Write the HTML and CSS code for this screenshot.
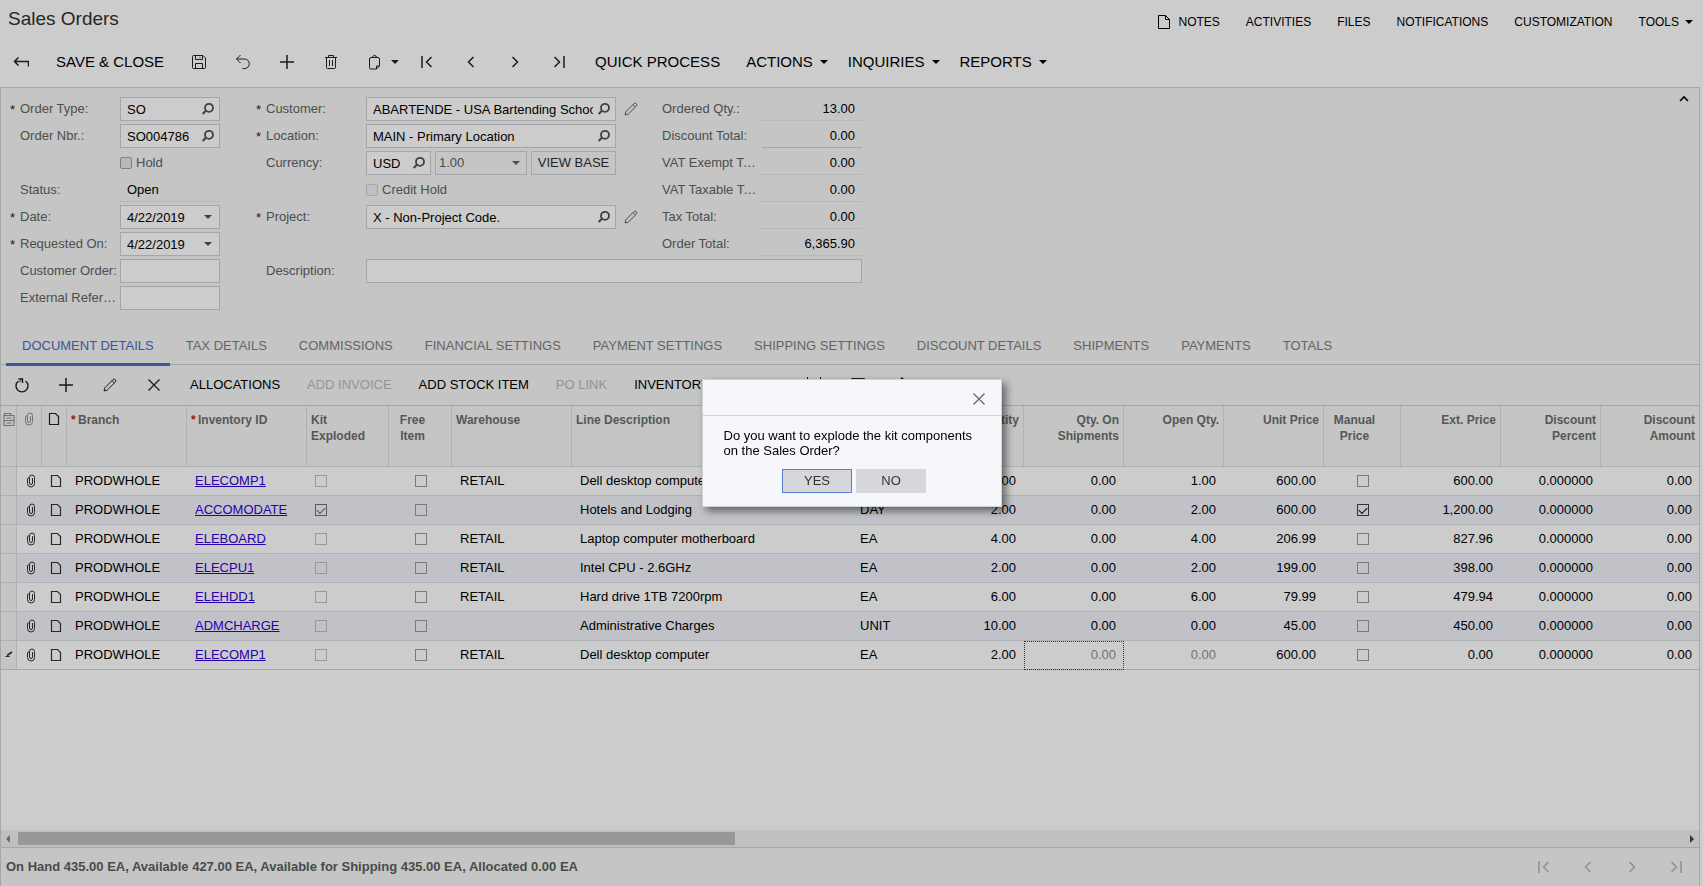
FILE: index.html
```html
<!DOCTYPE html>
<html lang="en">
<head>
  <meta charset="UTF-8" />
  <meta name="viewport" content="width=device-width, initial-scale=1.0" />
  <title>Sales Orders</title>
  <link rel="stylesheet" href="styles.css">
</head>
<body>
  <!-- icon sprite -->
  <svg class="sprite" aria-hidden="true">
    <symbol id="i-back" viewBox="0 0 16 16"><path d="M15.500 12.500V7.500H1.500M5.500 3.500L1.500 7.500L5.500 11.500" stroke-width="1.500"/></symbol>
    <symbol id="i-save" viewBox="0 0 16 16"><path d="M1.500 2.500a1 1 0 0 1 1-1H12l2.500 2.500v9.500a1 1 0 0 1-1 1h-11a1 1 0 0 1-1-1zM4.500 1.500v4h7v-4M8.500 3.500h1M4.500 14.500v-5h7v5"/></symbol>
    <symbol id="i-undo" viewBox="0 0 16 16"><path d="M5.500 1L1.500 5l4 4M1.500 5H9.500a4.800 4.800 0 0 1 0 9.600H7.500"/></symbol>
    <symbol id="i-plus" viewBox="0 0 16 16"><path d="M8 1v14M1 8h14" stroke-width="1.500"/></symbol>
    <symbol id="i-trash" viewBox="0 0 16 16"><path d="M2 3.500h12M5.500 3V1.500h5V3M3.500 3.500v10a1 1 0 0 0 1 1h7a1 1 0 0 0 1-1v-10M6.500 6v6M9.500 6v6"/></symbol>
    <symbol id="i-clip" viewBox="0 0 16 16"><path d="M5 3.500H4A1.500 1.500 0 0 0 2.500 5v8.500A1.500 1.500 0 0 0 4 15h5.500l3-3V5A1.500 1.500 0 0 0 11 3.500h-1M5 3.500h5M5.500 3.500a2 2 0 0 1 4 0M9.500 15v-3h3"/></symbol>
    <symbol id="i-first" viewBox="0 0 16 16"><path d="M3 2v12M12.500 3L7.500 8l5 5" stroke-width="1.500"/></symbol>
    <symbol id="i-prev" viewBox="0 0 16 16"><path d="M10.500 3L5.500 8l5 5" stroke-width="1.500"/></symbol>
    <symbol id="i-next" viewBox="0 0 16 16"><path d="M5.500 3l5 5l-5 5" stroke-width="1.500"/></symbol>
    <symbol id="i-last" viewBox="0 0 16 16"><path d="M13 2v12M3.500 3l5 5l-5 5" stroke-width="1.500"/></symbol>
    <symbol id="i-page" viewBox="0 0 16 16"><path d="M2.500 1.500h7l4 4v9h-11zM9.500 1.500v4h4"/></symbol>
    <symbol id="i-note" viewBox="0 0 16 16"><path d="M3.500 2.500h6l3 3v8h-9z" stroke-width="1.200"/></symbol>
    <symbol id="i-pencil" viewBox="0 0 16 16"><path d="M2 14l.8-3.200L11 2.600a1.700 1.700 0 0 1 2.400 2.400L5.200 13.200zM10 3.600l2.400 2.400"/></symbol>
    <symbol id="i-x" viewBox="0 0 16 16"><path d="M2.500 2.500l11 11M13.500 2.500l-11 11" stroke-width="1.300"/></symbol>
    <symbol id="i-refresh" viewBox="0 0 16 16"><path d="M4.500 4A6 6 0 1 0 11.500 4M4.500 2h4v4" stroke-width="1.400"/><path d="M8 2.500L5 5.500"/></symbol>
    <symbol id="i-look" viewBox="0 0 16 16"><path d="M5.800 9.800L2.700 13" stroke-width="2"/><circle cx="9" cy="6.800" r="4" stroke-width="1.800"/></symbol>
    <symbol id="i-clipper" viewBox="0 0 16 16"><path d="M9.500 5v5a1.500 1.500 0 0 1-3 0V4.500a2 2 0 0 0-2 1.500v4.500a3.500 3.500 0 0 0 7 0v-6a2.500 2.500 0 0 0-5 0"/></symbol>
    <symbol id="i-cfg" viewBox="0 0 16 16"><path d="M3.500 4.500v-2h6l1 2M3 4.500h10v10H3zM3 9.500h10M5.500 7h5M5.500 12h5" stroke-width="1.100"/></symbol>
    <symbol id="i-fit" viewBox="0 0 16 16"><path d="M1.500 0v15M14.500 0v15M4 8h8M6 6L4 8l2 2M10 6l2 2l-2 2"/></symbol>
    <symbol id="i-box" viewBox="0 0 16 16"><path d="M1.500 14.500v-13h13v13zM5 9l3 3l3-3M8 5v7"/></symbol>
    <symbol id="i-up" viewBox="0 0 16 16"><path d="M8 14V1M4 5l4-4l4 4" stroke-width="1.400"/></symbol>
    <symbol id="i-edit" viewBox="0 0 16 16"><path d="M6 8.500l5-3.500" stroke-width="1.600"/><path d="M4.500 9.500h4" /></symbol>
    <symbol id="i-collapse" viewBox="0 0 16 16"><path d="M4 10l4-4l4 4" stroke-width="1.600"/></symbol>
  </svg>

  <header class="page-head">
    <div class="title-row">
      <h1>Sales Orders</h1>
      <nav class="top-links">
        <a href="#"><svg class="ic"><use href="#i-page"/></svg>NOTES</a>
        <a href="#">ACTIVITIES</a>
        <a href="#">FILES</a>
        <a href="#">NOTIFICATIONS</a>
        <a href="#">CUSTOMIZATION</a>
        <a href="#">TOOLS <i class="caret"></i></a>
      </nav>
    </div>
    <div class="toolbar">
      <button class="icon-btn back" aria-label="Back"><svg class="ic"><use href="#i-back"/></svg></button>
      <button class="text-btn">SAVE &amp; CLOSE</button>
      <button class="icon-btn" aria-label="Save"><svg class="ic"><use href="#i-save"/></svg></button>
      <button class="icon-btn" aria-label="Undo"><svg class="ic"><use href="#i-undo"/></svg></button>
      <button class="icon-btn" aria-label="Add"><svg class="ic"><use href="#i-plus"/></svg></button>
      <button class="icon-btn" aria-label="Delete"><svg class="ic"><use href="#i-trash"/></svg></button>
      <button class="icon-btn with-caret" aria-label="Clipboard"><svg class="ic"><use href="#i-clip"/></svg><i class="caret"></i></button>
      <button class="icon-btn" aria-label="First"><svg class="ic"><use href="#i-first"/></svg></button>
      <button class="icon-btn" aria-label="Previous"><svg class="ic"><use href="#i-prev"/></svg></button>
      <button class="icon-btn" aria-label="Next"><svg class="ic"><use href="#i-next"/></svg></button>
      <button class="icon-btn" aria-label="Last"><svg class="ic"><use href="#i-last"/></svg></button>
      <button class="text-btn">QUICK PROCESS</button>
      <button class="menu-btn">ACTIONS <i class="caret"></i></button>
      <button class="menu-btn">INQUIRIES <i class="caret"></i></button>
      <button class="menu-btn">REPORTS <i class="caret"></i></button>
    </div>
  </header>

  <main class="panel">
    <form class="order-form">
      <label class="c1 req" for="orderType">Order Type:</label>
      <div class="c2 field"><input id="orderType" type="text" value="SO"><button type="button" aria-label="Find"><svg class="ic"><use href="#i-look"/></svg></button></div>
      <label class="c4 req" for="customer">Customer:</label>
      <div class="c5 field"><input id="customer" type="text" value="ABARTENDE - USA Bartending School"><button type="button" aria-label="Find"><svg class="ic"><use href="#i-look"/></svg></button></div>
      <button class="c6 edit" type="button" aria-label="Edit customer"><svg class="ic"><use href="#i-pencil"/></svg></button>
      <span class="c7 label">Ordered Qty.:</span><output class="c8">13.00</output>

      <label class="c1" for="orderNbr">Order Nbr.:</label>
      <div class="c2 field"><input id="orderNbr" type="text" value="SO004786"><button type="button" aria-label="Find"><svg class="ic"><use href="#i-look"/></svg></button></div>
      <label class="c4 req" for="location">Location:</label>
      <div class="c5 field"><input id="location" type="text" value="MAIN - Primary Location"><button type="button" aria-label="Find"><svg class="ic"><use href="#i-look"/></svg></button></div>
      <span class="c7 label">Discount Total:</span><output class="c8 solid">0.00</output>

      <label class="c2 check"><input type="checkbox"> Hold</label>
      <label class="c4" for="currency">Currency:</label>
      <div class="c5 currency">
        <div class="field cur"><input id="currency" type="text" value="USD"><button type="button" aria-label="Find"><svg class="ic"><use href="#i-look"/></svg></button></div>
        <div class="field rate"><select aria-label="Rate" disabled><option>1.00</option></select><i class="caret"></i></div>
        <button type="button" class="view-base">VIEW BASE</button>
      </div>
      <span class="c7 label">VAT Exempt Total:</span><output class="c8">0.00</output>

      <span class="c1 label">Status:</span><output class="c2 status">Open</output>
      <label class="c5 check off"><input type="checkbox" disabled> Credit Hold</label>
      <span class="c7 label">VAT Taxable Total:</span><output class="c8">0.00</output>

      <label class="c1 req" for="date">Date:</label>
      <div class="c2 field"><input id="date" type="text" value="4/22/2019"><button type="button" aria-label="Pick date"><i class="caret"></i></button></div>
      <label class="c4 req" for="project">Project:</label>
      <div class="c5 field"><input id="project" type="text" value="X - Non-Project Code."><button type="button" aria-label="Find"><svg class="ic"><use href="#i-look"/></svg></button></div>
      <button class="c6 edit" type="button" aria-label="Edit project"><svg class="ic"><use href="#i-pencil"/></svg></button>
      <span class="c7 label">Tax Total:</span><output class="c8">0.00</output>

      <label class="c1 req" for="requested">Requested On:</label>
      <div class="c2 field"><input id="requested" type="text" value="4/22/2019"><button type="button" aria-label="Pick date"><i class="caret"></i></button></div>
      <span class="c7 label">Order Total:</span><output class="c8">6,365.90</output>

      <label class="c1" for="custOrder">Customer Order:</label>
      <div class="c2 field"><input id="custOrder" type="text"></div>
      <label class="c4" for="descr">Description:</label>
      <div class="c5 wide field"><input id="descr" type="text"></div>

      <label class="c1" for="extRef">External Reference:</label>
      <div class="c2 field"><input id="extRef" type="text"></div>

      <button class="collapse" type="button" aria-label="Collapse"><svg class="ic"><use href="#i-collapse"/></svg></button>
    </form>

    <nav class="tabs">
      <a href="#" class="active">DOCUMENT DETAILS</a>
      <a href="#">TAX DETAILS</a>
      <a href="#">COMMISSIONS</a>
      <a href="#">FINANCIAL SETTINGS</a>
      <a href="#">PAYMENT SETTINGS</a>
      <a href="#">SHIPPING SETTINGS</a>
      <a href="#">DISCOUNT DETAILS</a>
      <a href="#">SHIPMENTS</a>
      <a href="#">PAYMENTS</a>
      <a href="#">TOTALS</a>
    </nav>

    <div class="grid-bar">
      <button class="icon-btn" aria-label="Refresh"><svg class="ic"><use href="#i-refresh"/></svg></button>
      <button class="icon-btn" aria-label="Add row"><svg class="ic"><use href="#i-plus"/></svg></button>
      <button class="icon-btn" aria-label="Edit row"><svg class="ic"><use href="#i-pencil"/></svg></button>
      <button class="icon-btn" aria-label="Delete row"><svg class="ic"><use href="#i-x"/></svg></button>
      <button class="text-btn">ALLOCATIONS</button>
      <button class="text-btn" disabled>ADD INVOICE</button>
      <button class="text-btn">ADD STOCK ITEM</button>
      <button class="text-btn" disabled>PO LINK</button>
      <button class="text-btn">INVENTORY SUMMARY</button>
      <button class="icon-btn" aria-label="Fit to screen"><svg class="ic"><use href="#i-fit"/></svg></button>
      <button class="icon-btn" aria-label="Export"><svg class="ic"><use href="#i-box"/></svg></button>
      <button class="icon-btn" aria-label="Load"><svg class="ic"><use href="#i-up"/></svg></button>
    </div>

    <div class="grid-wrap">
      <table id="lines">
        <colgroup>
          <col class="w16"><col class="w25"><col class="w25"><col class="w120"><col class="w120"><col class="w82"><col class="w63"><col class="w120"><col>
          <col class="w72"><col class="w100"><col class="w100"><col class="w100"><col class="w100"><col class="w77"><col class="w100"><col class="w100"><col class="w98">
        </colgroup>
        <thead>
          <tr>
            <th class="ico dim"><svg class="ic"><use href="#i-cfg"/></svg></th>
            <th class="ico dim"><svg class="ic"><use href="#i-clipper"/></svg></th>
            <th class="ico"><svg class="ic dark"><use href="#i-note"/></svg></th>
            <th><b class="star">*</b>Branch</th>
            <th><b class="star">*</b>Inventory ID</th>
            <th>Kit Exploded</th>
            <th class="mid">Free Item</th>
            <th>Warehouse</th>
            <th>Line Description</th>
            <th>UOM</th>
            <th class="num">Quantity</th>
            <th class="num">Qty. On Shipments</th>
            <th class="num">Open Qty.</th>
            <th class="num">Unit Price</th>
            <th class="mid">Manual Price</th>
            <th class="num">Ext. Price</th>
            <th class="num">Discount Percent</th>
            <th class="num">Discount Amount</th>
          </tr>
        </thead>
        <tbody></tbody>
      </table>
    </div>

    <div class="scrollbar"><i class="arrow left"></i><div class="track"><div class="thumb"></div></div><i class="arrow right"></i></div>

    <footer class="grid-foot">
      <span>On Hand 435.00 EA, Available 427.00 EA, Available for Shipping 435.00 EA, Allocated 0.00 EA</span>
      <div class="pager">
        <button class="icon-btn" disabled aria-label="First page"><svg class="ic"><use href="#i-first"/></svg></button>
        <button class="icon-btn" disabled aria-label="Previous page"><svg class="ic"><use href="#i-prev"/></svg></button>
        <button class="icon-btn" disabled aria-label="Next page"><svg class="ic"><use href="#i-next"/></svg></button>
        <button class="icon-btn" disabled aria-label="Last page"><svg class="ic"><use href="#i-last"/></svg></button>
      </div>
    </footer>
  </main>

  <div class="overlay">
    <div class="dialog" role="dialog" aria-label="Confirmation">
      <div class="dialog-head"><button aria-label="Close"><svg class="ic"><use href="#i-x"/></svg></button></div>
      <p>Do you want to explode the kit components on the Sales Order?</p>
      <div class="dialog-buttons">
        <button class="primary">YES</button>
        <button>NO</button>
      </div>
    </div>
  </div>

  <script>
    // item, kit, warehouse, description, uom, qty, shipped, open, price, manual, ext
    const lines = [
      ["ELECOMP1", 0, "RETAIL", "Dell desktop computer", "EA", "1.00", "0.00", "1.00", "600.00", 0, "600.00"],
      ["ACCOMODATE", 1, "", "Hotels and Lodging", "DAY", "2.00", "0.00", "2.00", "600.00", 1, "1,200.00"],
      ["ELEBOARD", 0, "RETAIL", "Laptop computer motherboard", "EA", "4.00", "0.00", "4.00", "206.99", 0, "827.96"],
      ["ELECPU1", 0, "RETAIL", "Intel CPU - 2.6GHz", "EA", "2.00", "0.00", "2.00", "199.00", 0, "398.00"],
      ["ELEHDD1", 0, "RETAIL", "Hard drive 1TB 7200rpm", "EA", "6.00", "0.00", "6.00", "79.99", 0, "479.94"],
      ["ADMCHARGE", 0, "", "Administrative Charges", "UNIT", "10.00", "0.00", "0.00", "45.00", 0, "450.00"],
      ["ELECOMP1", 0, "RETAIL", "Dell desktop computer", "EA", "2.00", "0.00", "0.00", "600.00", 0, "0.00"]
    ];

    function icon(name) {
      return `<svg class="ic"><use href="#i-${name}"/></svg>`;
    }

    const tbody = document.querySelector("#lines tbody");
    lines.forEach((l, i) => {
      const current = i === lines.length - 1;
      const row = `
        <tr class="${current ? "current" : ""}">
          <td class="ico sel">${current ? icon("edit") : ""}</td>
          <td class="ico">${icon("clipper")}</td>
          <td class="ico">${icon("note")}</td>
          <td>PRODWHOLE</td>
          <td><a href="#">${l[0]}</a></td>
          <td class="kit"><input type="checkbox" aria-label="Kit exploded" disabled ${l[1] ? "checked" : ""}></td>
          <td class="box"><input type="checkbox" aria-label="Free item"></td>
          <td>${l[2]}</td><td>${l[3]}</td><td>${l[4]}</td>
          <td class="num">${l[5]}</td>
          <td class="num ${current ? "focus" : ""}">${l[6]}</td>
          <td class="num ${current ? "faded" : ""}">${l[7]}</td>
          <td class="num">${l[8]}</td>
          <td class="box"><input type="checkbox" aria-label="Manual price" ${l[9] ? "checked" : ""}></td>
          <td class="num">${l[10]}</td><td class="num">0.000000</td><td class="num">0.00</td>
        </tr>`;
      tbody.insertAdjacentHTML("beforeend", row);
    });
  </script>
</body>
</html>
```
FILE: styles.css
```css
* {
  box-sizing: border-box;
}
body {
  margin: 0;
  height: 100vh;
  display: flex;
  flex-direction: column;
  overflow: hidden;
  font: 13px/16px "Liberation Sans", Arial, sans-serif;
  color: #000;
  background: #fff;
}
button, input, select {
  font: inherit;
  color: inherit;
  background: none;
  border: 0;
  padding: 0;
  margin: 0;
}
a {
  color: inherit;
  text-decoration: none;
}
.sprite {
  display: none;
}
.ic {
  width: 16px;
  height: 16px;
  flex: none;
  display: block;
  fill: none;
  stroke: currentColor;
}
.caret {
  flex: none;
  border: 4px solid transparent;
  border-top-color: currentColor;
  border-bottom-width: 0;
}

/* page header */
.page-head {
  height: 87px;
  flex: none;
}
.title-row {
  display: flex;
  justify-content: space-between;
  height: 40px;
  padding: 0 10px 0 8px;
}
h1 {
  margin: 0;
  font-size: 19px;
  font-weight: normal;
  line-height: 37px;
  color: #303030;
}
.top-links {
  display: flex;
  gap: 26px;
  font-size: 12px;
  line-height: 44px;
}
.top-links a {
  display: flex;
  align-items: center;
  gap: 6px;
  height: 44px;
}
.toolbar {
  display: flex;
  align-items: center;
  height: 44px;
  font-size: 15px;
}
.icon-btn {
  width: 44px;
  height: 30px;
  display: flex;
  align-items: center;
  justify-content: center;
  color: #222;
}
.back {
  width: 42px;
}
.with-caret {
  width: 52px;
  gap: 8px;
  padding-left: 8px;
}
.text-btn {
  padding: 0 13px 0 14px;
}
.menu-btn {
  display: flex;
  align-items: center;
  gap: 7px;
  padding: 0 7px 0 13px;
}

/* order form */
.panel {
  flex: 1;
  min-height: 0;
  display: flex;
  flex-direction: column;
  margin-right: 3px;
  border: 1px solid #cfd1d4;
  border-bottom: 0;
  background: #f5f7f6;
}
.order-form {
  position: relative;
  display: grid;
  grid-template-columns: 110px 100px 36px 110px 250px 46px 100px 100px;
  grid-auto-rows: 24px;
  row-gap: 3px;
  padding: 9px 0 15px 9px;
}
.c1 { grid-column: 1; }
.c2 { grid-column: 2; }
.c4 { grid-column: 4; }
.c5 { grid-column: 5; }
.c6 { grid-column: 6; }
.c7 { grid-column: 7; }
.c8 { grid-column: 8; }
.wide { grid-column: 5 / 9; }
.order-form label, .label {
  line-height: 24px;
  color: #606362;
  white-space: nowrap;
  overflow: hidden;
  text-overflow: ellipsis;
}
.c1, .c4 {
  position: relative;
  padding-left: 10px;
  padding-right: 2px;
}
.label.c7 {
  padding-right: 2px;
}
.req::before {
  content: "*";
  position: absolute;
  left: 0;
  top: 1px;
  color: #222;
}
.field {
  display: flex;
  align-items: center;
  gap: 3px;
  min-width: 0;
  padding: 0 3px 0 6px;
  border: 1px solid #cfd0d8;
  background: #fff;
}
.field input, .field select {
  flex: 1;
  width: 0;
  min-width: 0;
  height: 22px;
  outline: 0;
}
.field button {
  display: flex;
  justify-content: center;
  min-width: 16px;
  color: #505050;
}
.currency {
  display: flex;
  gap: 4px;
}
.cur {
  width: 65px;
}
.rate {
  width: 92px;
  padding: 0 6px 0 3px;
  background: none;
  color: #606362;
}
.field.rate select {
  appearance: none;
  opacity: 1;
}
.view-base {
  flex: 1;
  border: 1px solid #d0d2d5;
  color: #303030;
}
.edit {
  display: flex;
  align-items: center;
  padding-left: 7px;
  color: #606060;
}
output {
  line-height: 24px;
  border-bottom: 1px dotted #d2d4d4;
}
.c8 {
  text-align: right;
  padding-right: 7px;
}
.c8.solid {
  border-bottom: 1px solid #cfd0d8;
}
.status {
  padding-left: 7px;
}
.check {
  display: flex;
  align-items: center;
  gap: 4px;
}
.check.c5 {
  padding-left: 0;
}
.check input {
  appearance: none;
  width: 12px;
  height: 12px;
  border: 1px solid #a0a0a0;
  border-radius: 2px;
  background: #e8e8e8;
}
.check.off input {
  border-color: #d0d0d0;
  background: #f0f0f0;
}
.collapse {
  position: absolute;
  right: 7px;
  top: 3px;
}

/* tabs */
.tabs {
  display: flex;
  height: 40px;
  flex: none;
  padding-left: 5px;
  border-bottom: 1px solid #cfd0d4;
  color: #7c7f7e;
}
.tabs a {
  height: 41px;
  padding: 0 16px;
  line-height: 41px;
}
.tabs .active {
  color: #4a6dc4;
  border-bottom: 3px solid #4a6dc4;
}

/* grid toolbar */
.grid-bar {
  display: flex;
  align-items: center;
  height: 41px;
  flex: none;
  border-bottom: 1px solid #cfd0d4;
}
.grid-bar .icon-btn {
  padding-right: 2px;
}
.grid-bar .text-btn {
  padding: 0 14px 0 13px;
}
.text-btn:disabled {
  color: #b8baba;
}

/* lines table */
.grid-wrap {
  flex: 1;
  min-height: 0;
  overflow: hidden;
  background: #fff;
}
table {
  width: 100%;
  table-layout: fixed;
  border-collapse: separate;
  border-spacing: 0;
}
.w16 { width: 16px; }
.w25 { width: 25px; }
.w63 { width: 63px; }
.w72 { width: 72px; }
.w77 { width: 77px; }
.w82 { width: 82px; }
.w98 { width: 98px; }
.w100 { width: 100px; }
.w120 { width: 120px; }
th {
  height: 61px;
  padding: 6px 4px 0;
  vertical-align: top;
  text-align: left;
  font-size: 12px;
  line-height: 16px;
  color: #6c6e6e;
  background: #f5f7f6;
  border-right: 1px solid #dcdee3;
  border-bottom: 1px solid #dcdee3;
}
th.ico {
  padding: 5px 0 0;
}
th.dim {
  color: #8c8e8e;
}
th:last-child {
  border-right: 0;
}
.dark {
  color: #222;
}
.star {
  display: inline-block;
  width: 7px;
  color: #d01818;
}
td {
  height: 29px;
  padding: 0 8px;
  white-space: nowrap;
  border-bottom: 1px solid #dcdee3;
}
tbody tr:nth-child(even) td {
  background: #f2f3f9;
}
.num {
  text-align: right;
}
td.num:last-child {
  padding-right: 7px;
}
th.mid {
  text-align: center;
  padding: 6px 19px 0 4px;
}
.ico .ic {
  margin: 0 auto;
}
td.ico {
  padding: 0 0 0 3px;
  color: #333;
}
tbody td.sel, tbody tr:nth-child(even) td.sel {
  padding: 0;
  background: #f5f7f6;
  border-right: 1px solid #dcdee3;
}
td a {
  color: #3200d8;
  text-decoration: underline;
}
td input {
  appearance: none;
  display: block;
  width: 12px;
  height: 12px;
  border: 1px solid #999;
}
.kit input:disabled {
  border-color: #c0c0c0;
}
.box input {
  margin: 0 auto;
}
td input:checked {
  border-color: #404040;
}
.kit input:checked {
  border-color: #707070;
  color: #666;
}
td input:checked::after {
  content: "";
  display: block;
  width: 7px;
  height: 4px;
  margin: 2px 0 0 1px;
  border: solid currentColor;
  border-width: 0 0 1px 1px;
  transform: rotate(-45deg);
}
.current td {
  border-bottom-color: #cfd0d4;
}
.faded, .focus {
  color: #909090;
}
.focus {
  outline: 1px dotted #444;
  outline-offset: -1px;
}

/* scrollbar and footer */
.scrollbar {
  display: flex;
  align-items: center;
  height: 18px;
  flex: none;
  padding: 0 5px;
  background: #f0f0f0;
  border-bottom: 1px solid #cfd0d4;
}
.track {
  flex: 1;
  padding: 0 4px 0 8px;
}
.thumb {
  width: 43%;
  height: 13px;
  background: #bebebe;
}
.arrow {
  border: 4px solid transparent;
}
.arrow.left {
  border-right-color: #888;
  border-left-width: 0;
}
.arrow.right {
  border-left-color: #444;
  border-right-width: 0;
}
.grid-foot {
  display: flex;
  align-items: center;
  justify-content: space-between;
  height: 38px;
  flex: none;
  padding: 0 1px 0 5px;
  font-weight: bold;
  color: #5c5e5e;
}
.pager {
  display: flex;
}
.pager .icon-btn {
  color: #b4b6b6;
}

/* message box */
.overlay {
  position: fixed;
  inset: 0;
  display: flex;
  align-items: center;
  justify-content: center;
  background: rgba(0, 0, 0, 0.2);
}
.dialog {
  width: 300px;
  border: 1px solid #d0d2d6;
  background: #f6f7fa;
  box-shadow: 4px 4px 8px rgba(0, 0, 0, 0.5);
}
.dialog-head {
  display: flex;
  align-items: center;
  justify-content: flex-end;
  height: 36px;
  padding: 3px 14px 0;
  border-bottom: 1px solid #cfd1d5;
  color: #666;
}
.dialog p {
  margin: 12px 19px 11px 21px;
  line-height: 15px;
}
.dialog-buttons {
  display: flex;
  justify-content: center;
  gap: 4px;
  padding: 0 0 13px 5px;
}
.dialog-buttons button {
  width: 70px;
  height: 24px;
  background: #d5d7db;
  color: #333;
}
.dialog-buttons .primary {
  border: 1px solid #5a7fd4;
}
```
